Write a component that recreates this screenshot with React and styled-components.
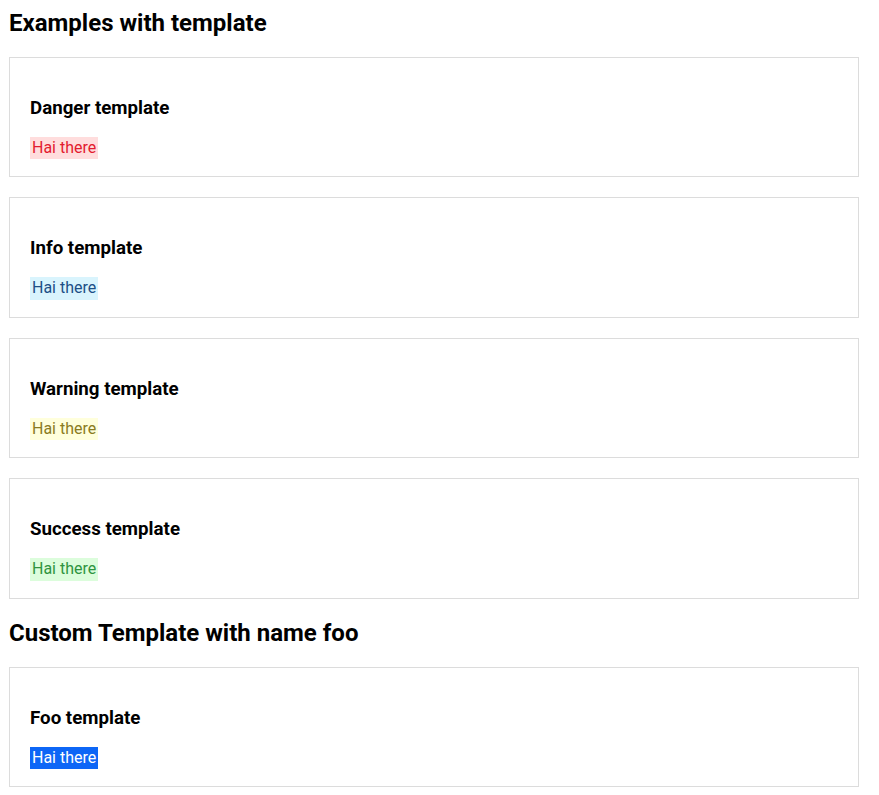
import React from 'react';
import styled, { createGlobalStyle } from 'styled-components';

const GlobalStyle = createGlobalStyle`
  html, body {
    margin: 0;
    padding: 0;
    background: #ffffff;
    overflow: hidden;
  }
  body {
    font-family: Roboto, "Liberation Sans", Arial, sans-serif;
    color: #000000;
  }
`;

const Page = styled.div`
  display: flex;
  flex-direction: column;
  gap: 20px;
  width: 850px;
  padding: 9px;
`;

const SectionTitle = styled.h2`
  margin: 0;
  font-size: 24px;
  font-weight: 700;
  line-height: 28px;
`;

const Card = styled.div`
  border: 1px solid #dcdcdc;
  padding: 20px 20px 17px;
`;

const CardTitle = styled.h3`
  margin: 19px 0 18px;
  font-size: 18.72px;
  font-weight: 700;
  line-height: 22px;
`;

const tones = {
  danger: { bg: '#ffdddd', fg: '#e31b2f' },
  info: { bg: '#d9f4fd', fg: '#1d4f86' },
  warning: { bg: '#ffffdc', fg: '#8a7b22' },
  success: { bg: '#dcfddc', fg: '#2f9440' },
  foo: { bg: '#0d66f6', fg: '#ffffff' },
};

const Badge = styled.span`
  display: inline-block;
  padding: 0 2px;
  font-size: 16px;
  line-height: 22.4px;
  background: ${(p) => tones[p.$tone].bg};
  color: ${(p) => tones[p.$tone].fg};
`;

const templates = [
  { tone: 'danger', title: 'Danger template' },
  { tone: 'info', title: 'Info template' },
  { tone: 'warning', title: 'Warning template' },
  { tone: 'success', title: 'Success template' },
];

function TemplateCard({ tone, title }) {
  return (
    <Card>
      <CardTitle>{title}</CardTitle>
      <Badge $tone={tone}>Hai there</Badge>
    </Card>
  );
}

export default function App() {
  return (
    <>
      <GlobalStyle />
      <Page>
        <SectionTitle>Examples with template</SectionTitle>
        {templates.map((t) => (
          <TemplateCard key={t.tone} tone={t.tone} title={t.title} />
        ))}
        <SectionTitle>Custom Template with name foo</SectionTitle>
        <TemplateCard tone="foo" title="Foo template" />
      </Page>
    </>
  );
}
